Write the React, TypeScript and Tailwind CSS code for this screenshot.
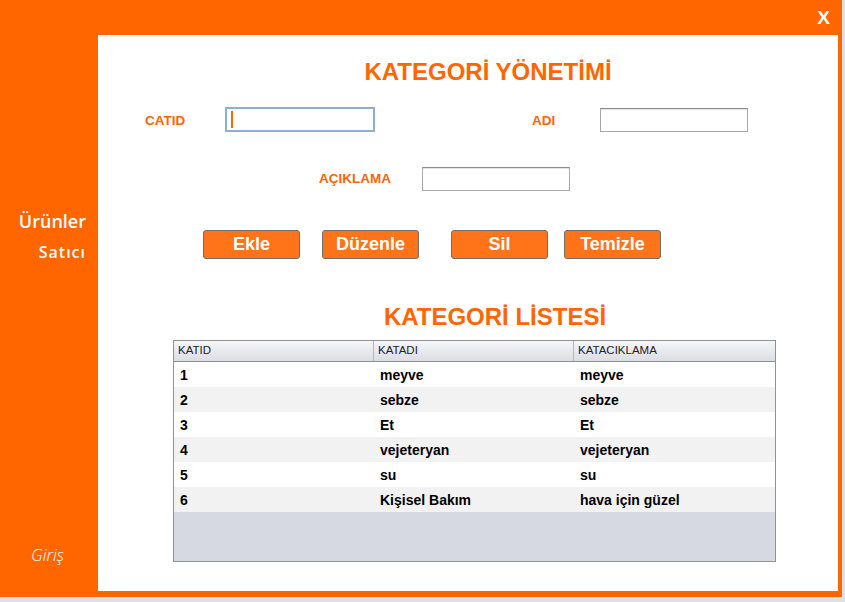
const rows = [
  { id: '1', name: 'meyve', desc: 'meyve' },
  { id: '2', name: 'sebze', desc: 'sebze' },
  { id: '3', name: 'Et', desc: 'Et' },
  { id: '4', name: 'vejeteryan', desc: 'vejeteryan' },
  { id: '5', name: 'su', desc: 'su' },
  { id: '6', name: 'Kişisel Bakım', desc: 'hava için güzel' },
]

const arial = "font-['Liberation_Sans',Arial,sans-serif]"

function Btn({ label }: { label: string }) {
  return (
    <button className="flex h-[29px] w-[97px] items-center justify-center rounded-[3px] border border-[#6f6f6f] bg-[#ff7418] text-[18px] font-bold text-white">
      {label}
    </button>
  )
}

export default function App() {
  return (
    <div className={`h-[602px] w-[845px] overflow-hidden bg-[#dde0e6] ${arial}`}>
      <div className="flex h-[597px] w-[842px] flex-col bg-[#ff6600]">
        {/* title bar */}
        <div className="flex h-[35px] items-center justify-end pr-[12px]">
          <span className="text-[19px] font-bold leading-none text-white">X</span>
        </div>

        <div className="flex h-[556px]">
          {/* side menu */}
          <aside className="flex w-[98px] flex-col items-end pr-[12px] pt-[174px] font-['Open_Sans',sans-serif] text-white">
            <span className="text-[18px] font-semibold leading-[24px]">Ürünler</span>
            <span className="mt-[7px] text-[16px] font-semibold leading-[24px] tracking-[1px]">Satıcı</span>
            <span className="mt-auto mb-[24px] self-start pl-[31px] text-[17px] font-light italic leading-[24px]">Giriş</span>
          </aside>

          {/* content */}
          <main className="flex w-[740px] flex-col bg-white">
            <h1 className="mt-[22px] pl-[40px] text-center text-[24px] font-bold leading-[30px] text-[#ff6600]">
              KATEGORİ YÖNETİMİ
            </h1>

            <div className="mt-[20px] flex h-[25px] items-center text-[13.5px] font-bold text-[#ff6600]">
              <span className="ml-[47px] w-[80px] pt-[3px]">CATID</span>
              <div className="flex h-[25px] w-[150px] items-center border-2 border-[#8eaed4] pl-[4px]">
                <span className="h-[17px] w-[1.5px] bg-[#ff6600]" />
              </div>
              <span className="ml-[157px] w-[68px] pt-[3px]">ADI</span>
              <div className="h-[24px] w-[148px] border border-[#a8a8a8] border-t-[#8c8c8c] bg-white shadow-[inset_0_1px_1px_rgba(0,0,0,0.12)]" />
            </div>

            <div className="mt-[34px] flex h-[25px] items-center text-[13.5px] font-bold text-[#ff6600]">
              <span className="ml-[221px] w-[103px] pt-[2px]">AÇIKLAMA</span>
              <div className="h-[24px] w-[148px] border border-[#a8a8a8] border-t-[#8c8c8c] bg-white shadow-[inset_0_1px_1px_rgba(0,0,0,0.12)]" />
            </div>

            <div className="mt-[39px] flex pl-[105px]">
              <Btn label="Ekle" />
              <div className="ml-[22px]"><Btn label="Düzenle" /></div>
              <div className="ml-[32px]"><Btn label="Sil" /></div>
              <div className="ml-[16px]"><Btn label="Temizle" /></div>
            </div>

            <h2 className="mt-[43px] pl-[54px] text-center text-[24px] font-bold leading-[30px] text-[#ff6600]">
              KATEGORİ LİSTESİ
            </h2>

            <div className="ml-[75px] mt-[8px] flex h-[222px] w-[603px] flex-col border border-[#8e9198] bg-[#d6d9e1]">
              <div className="grid h-[21px] grid-cols-[200px_200px_201px] border-b border-[#8b8e94] bg-gradient-to-b from-[#f6f6f8] to-[#dcdde3] text-[11.5px] text-[#222]">
                <div className="flex items-center border-r border-[#b4b6bc] pl-[4px]">KATID</div>
                <div className="flex items-center border-r border-[#b4b6bc] pl-[4px]">KATADI</div>
                <div className="flex items-center pl-[4px]">KATACIKLAMA</div>
              </div>
              {rows.map((r, i) => (
                <div
                  key={r.id}
                  className={`grid h-[25px] grid-cols-[200px_200px_201px] items-center pt-[1px] text-[14px] font-bold text-black ${i % 2 ? 'bg-[#f2f2f2]' : 'bg-white'}`}
                >
                  <span className="pl-[6px]">{r.id}</span>
                  <span className="pl-[6px]">{r.name}</span>
                  <span className="pl-[6px]">{r.desc}</span>
                </div>
              ))}
            </div>
          </main>
        </div>
      </div>
    </div>
  )
}
